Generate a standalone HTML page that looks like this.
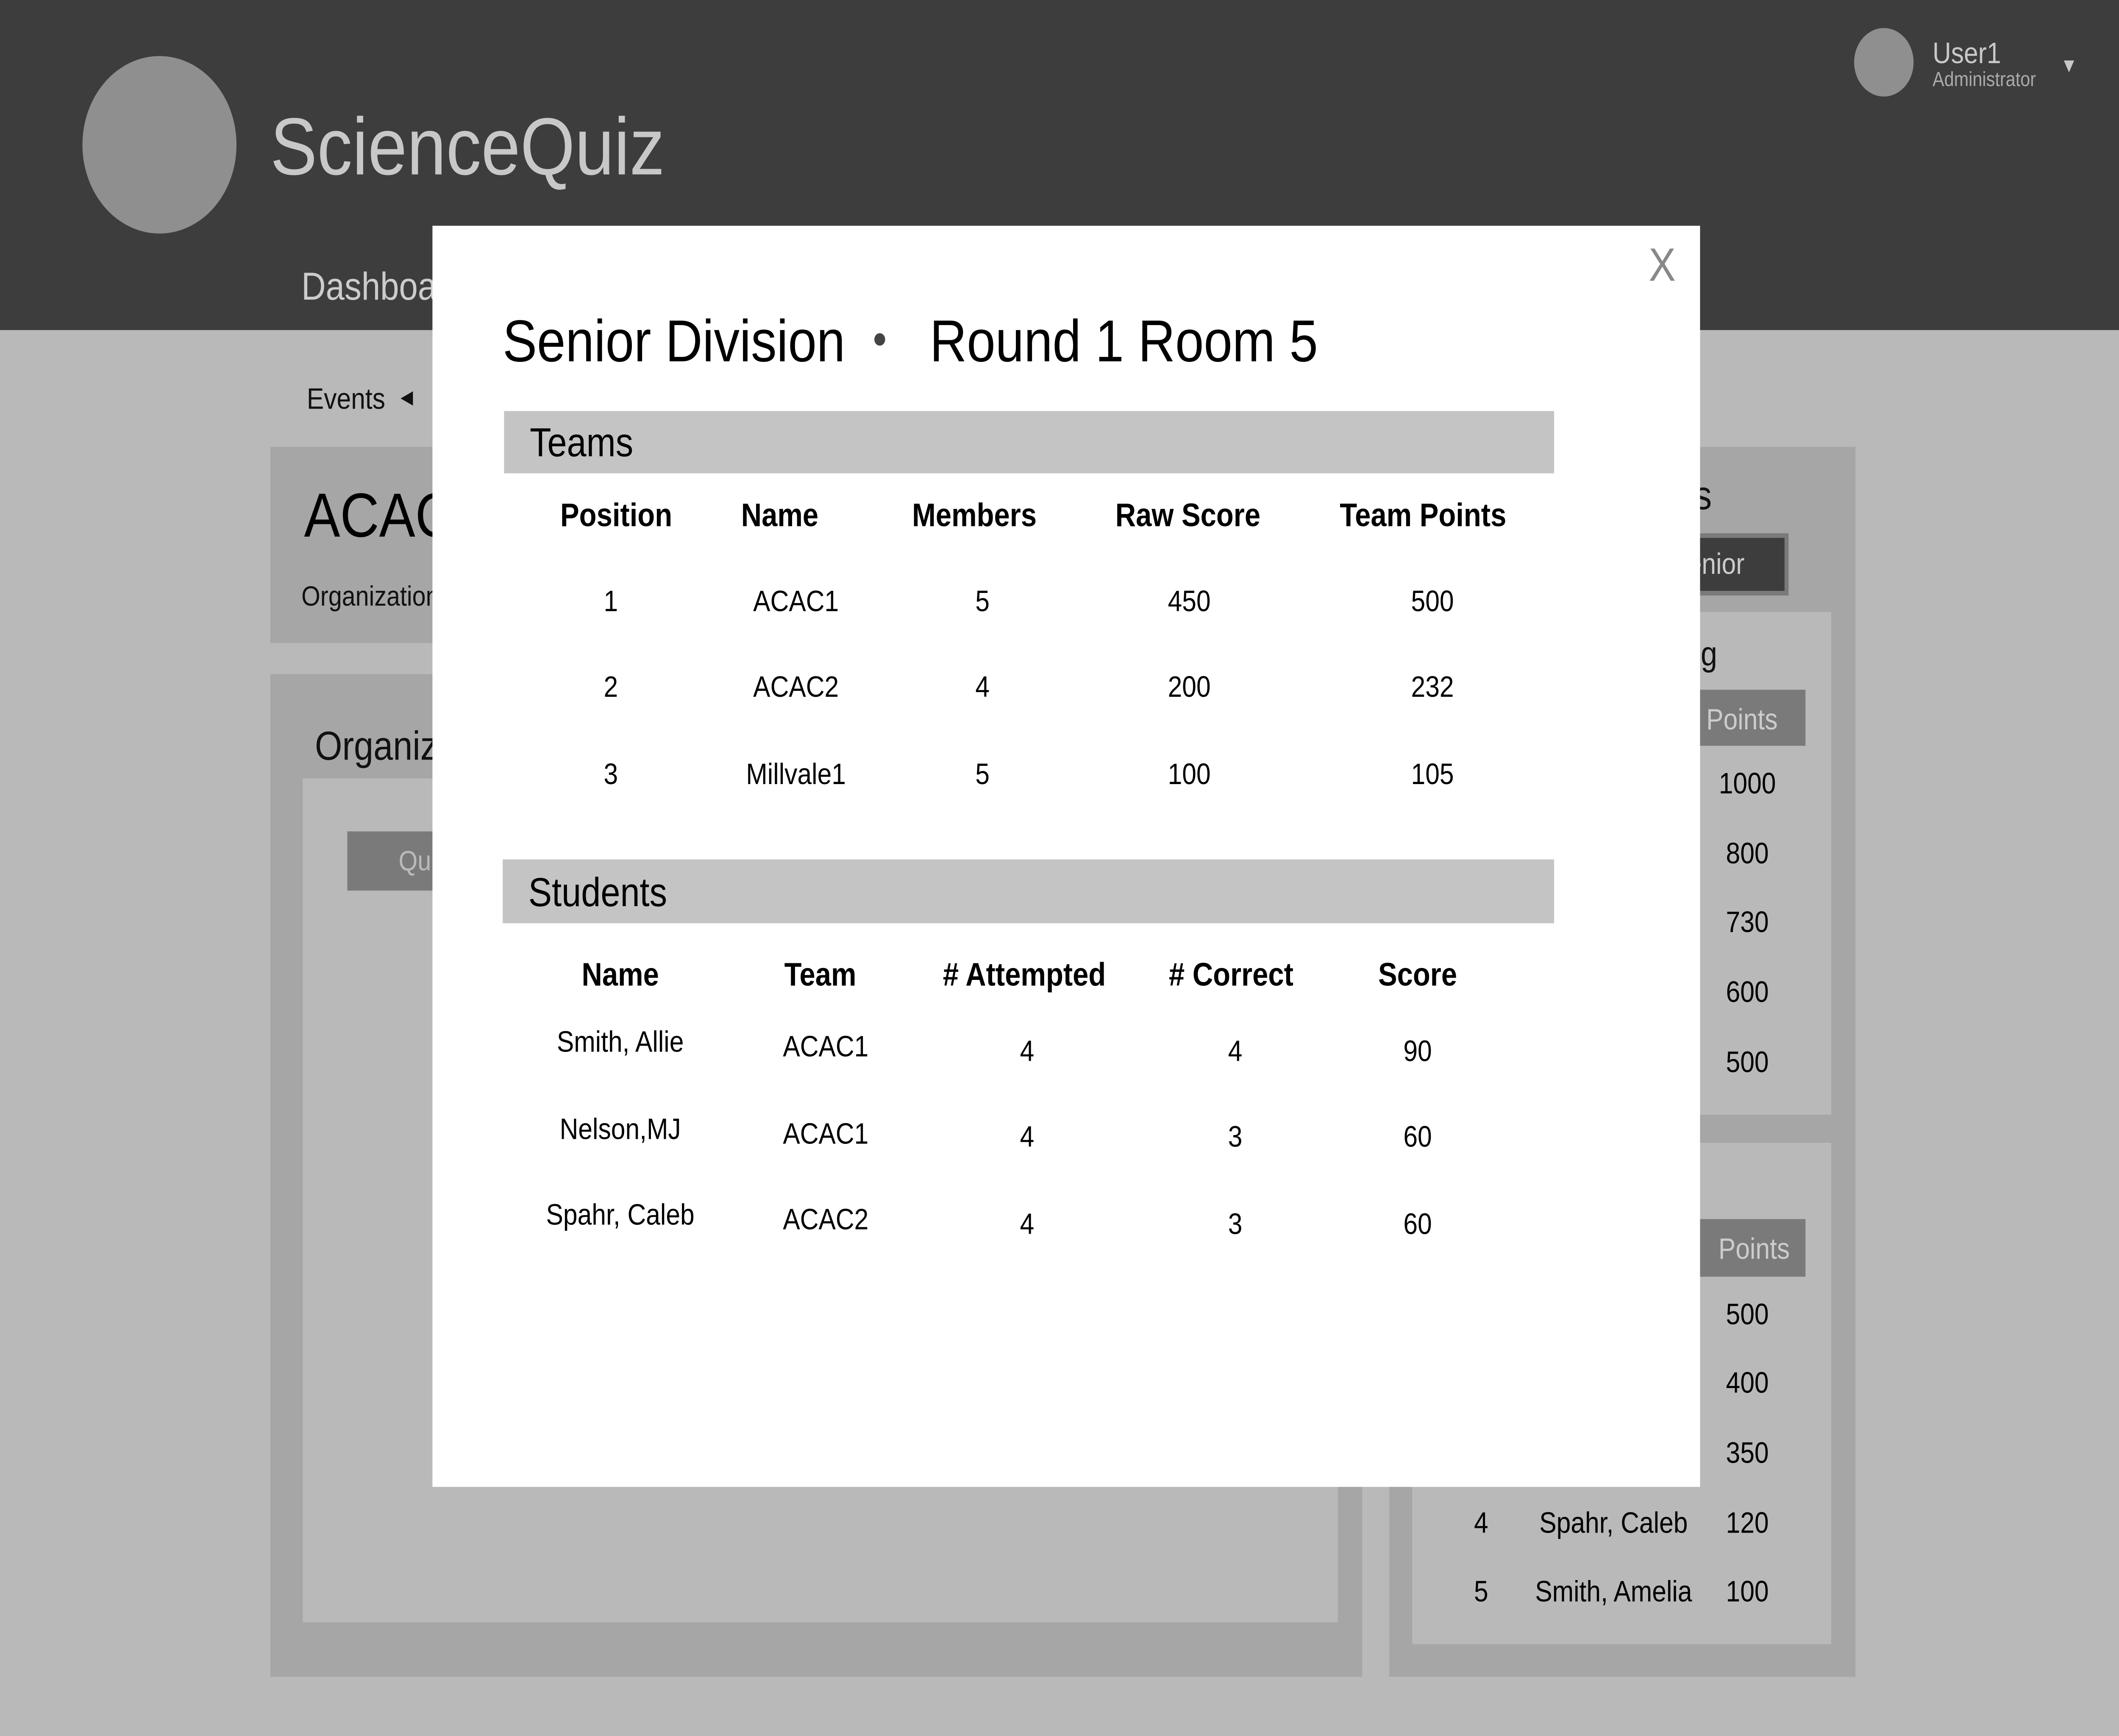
<!DOCTYPE html>
<html><head><meta charset="utf-8">
<style>
html,body{margin:0;padding:0;width:100vw;height:100vh;overflow:hidden;background:#b9b9b9;}
svg{display:block;width:100vw;height:100vh;}
text{font-family:"Liberation Sans",sans-serif;fill:#000;}
.c{text-anchor:middle;dominant-baseline:central;}
.l{dominant-baseline:central;}
.b{font-weight:bold;}
</style></head><body>
<svg viewBox="0 0 1568 1115" preserveAspectRatio="none" xmlns="http://www.w3.org/2000/svg">
<rect x="0" y="0" width="1568" height="1115" fill="#b9b9b9"/>
<rect x="0" y="0" width="1568" height="212" fill="#3d3d3d"/>
<circle cx="118" cy="93" r="57" fill="#8f8f8f"/>
<text class="l" x="200" y="94" font-size="52" style="fill:#c8c8c8">ScienceQuiz</text>
<circle cx="1394" cy="40" r="22" fill="#8f8f8f"/>
<text class="l" x="1430" y="34" font-size="19" style="fill:#c8c8c8">User1</text>
<text class="l" x="1430" y="51" font-size="13" style="fill:#aaa">Administrator</text>
<text class="c" x="1531" y="42" font-size="13" style="fill:#c8c8c8">▼</text>
<text class="l" x="223" y="184" font-size="25" style="fill:#ccc">Dashboard</text>
<text class="l" x="227" y="256" font-size="19" style="fill:#111">Events</text>
<text class="c" x="301" y="255" font-size="12" style="fill:#111">◀</text>

<rect x="200" y="287" width="808" height="126" fill="#a6a6a6"/>
<text class="l" x="225" y="331" font-size="40">ACAC</text>
<text class="l" x="223" y="383" font-size="18" style="fill:#111">Organization</text>
<rect x="200" y="433" width="808" height="644" fill="#a6a6a6"/>
<rect x="224" y="500" width="766" height="542" fill="#b9b9b9"/>
<text class="l" x="233" y="479" font-size="26" style="fill:#111">Organization</text>
<rect x="257" y="534" width="120" height="38" fill="#7a7a7a"/>
<text class="l" x="295" y="553" font-size="18" style="fill:#bbb">Quiz</text>

<rect x="1028" y="287" width="345" height="790" fill="#a6a6a6"/>
<text class="l" x="1180" y="318" font-size="26" style="fill:#111">Results</text>
<rect x="1200" y="344" width="122" height="37" fill="#3d3d3d" stroke="#7a7a7a" stroke-width="3"/>
<text class="l" x="1236" y="362" font-size="19" style="fill:#ccc">Senior</text>
<rect x="1045" y="393" width="310" height="323" fill="#b9b9b9"/>
<text class="l" x="1190" y="420" font-size="22" style="fill:#111">Ranking</text>
<rect x="1250" y="443" width="86" height="36" fill="#7a7a7a"/>
<text class="c" x="1289" y="462" font-size="19" style="fill:#ccc">Points</text>
<text class="c" x="1293" y="503" font-size="19">1000</text>
<text class="c" x="1293" y="548" font-size="19">800</text>
<text class="c" x="1293" y="592" font-size="19">730</text>
<text class="c" x="1293" y="637" font-size="19">600</text>
<text class="c" x="1293" y="682" font-size="19">500</text>
<rect x="1045" y="734" width="310" height="322" fill="#b9b9b9"/>
<text class="l" x="1170" y="760" font-size="22" style="fill:#111">Ranking</text>
<rect x="1250" y="783" width="86" height="37" fill="#7a7a7a"/>
<text class="c" x="1298" y="802" font-size="19" style="fill:#ccc">Points</text>
<text class="c" x="1293" y="844" font-size="19">500</text>
<text class="c" x="1293" y="888" font-size="19">400</text>
<text class="c" x="1293" y="933" font-size="19">350</text>
<text class="c" x="1096" y="978" font-size="19">4</text>
<text class="c" x="1194" y="978" font-size="19">Spahr, Caleb</text>
<text class="c" x="1293" y="978" font-size="19">120</text>
<text class="c" x="1096" y="1022" font-size="19">5</text>
<text class="c" x="1194" y="1022" font-size="19">Smith, Amelia</text>
<text class="c" x="1293" y="1022" font-size="19">100</text>

<rect x="320" y="145" width="938" height="810" fill="#fff"/>
<text class="c" x="1230" y="170" font-size="30" style="fill:#888">X</text>
<text class="l" x="372" y="219" font-size="38">Senior Division</text>
<circle cx="651" cy="218" r="4" fill="#444"/>
<text class="l" x="688" y="219" font-size="38">Round 1 Room 5</text>

<rect x="373" y="264" width="777" height="40" fill="#c4c4c4"/>
<text class="l" x="392" y="284" font-size="26">Teams</text>
<text class="c b" x="456" y="331" font-size="21">Position</text>
<text class="c b" x="577" y="331" font-size="21">Name</text>
<text class="c b" x="721" y="331" font-size="21">Members</text>
<text class="c b" x="879" y="331" font-size="21">Raw Score</text>
<text class="c b" x="1053" y="331" font-size="21">Team Points</text>

<text class="c" x="452" y="386" font-size="19">1</text>
<text class="c" x="589" y="386" font-size="19">ACAC1</text>
<text class="c" x="727" y="386" font-size="19">5</text>
<text class="c" x="880" y="386" font-size="19">450</text>
<text class="c" x="1060" y="386" font-size="19">500</text>
<text class="c" x="452" y="441" font-size="19">2</text>
<text class="c" x="589" y="441" font-size="19">ACAC2</text>
<text class="c" x="727" y="441" font-size="19">4</text>
<text class="c" x="880" y="441" font-size="19">200</text>
<text class="c" x="1060" y="441" font-size="19">232</text>
<text class="c" x="452" y="497" font-size="19">3</text>
<text class="c" x="589" y="497" font-size="19">Millvale1</text>
<text class="c" x="727" y="497" font-size="19">5</text>
<text class="c" x="880" y="497" font-size="19">100</text>
<text class="c" x="1060" y="497" font-size="19">105</text>

<rect x="372" y="552" width="778" height="41" fill="#c4c4c4"/>
<text class="l" x="391" y="573" font-size="26">Students</text>
<text class="c b" x="459" y="626" font-size="21">Name</text>
<text class="c b" x="607" y="626" font-size="21">Team</text>
<text class="c b" x="758" y="626" font-size="21"># Attempted</text>
<text class="c b" x="911" y="626" font-size="21"># Correct</text>
<text class="c b" x="1049" y="626" font-size="21">Score</text>

<text class="c" x="459" y="669" font-size="19">Smith, Allie</text>
<text class="c" x="611" y="672" font-size="19">ACAC1</text>
<text class="c" x="760" y="675" font-size="19">4</text>
<text class="c" x="914" y="675" font-size="19">4</text>
<text class="c" x="1049" y="675" font-size="19">90</text>
<text class="c" x="459" y="725" font-size="19">Nelson,MJ</text>
<text class="c" x="611" y="728" font-size="19">ACAC1</text>
<text class="c" x="760" y="730" font-size="19">4</text>
<text class="c" x="914" y="730" font-size="19">3</text>
<text class="c" x="1049" y="730" font-size="19">60</text>
<text class="c" x="459" y="780" font-size="19">Spahr, Caleb</text>
<text class="c" x="611" y="783" font-size="19">ACAC2</text>
<text class="c" x="760" y="786" font-size="19">4</text>
<text class="c" x="914" y="786" font-size="19">3</text>
<text class="c" x="1049" y="786" font-size="19">60</text>
</svg>
</body></html>
